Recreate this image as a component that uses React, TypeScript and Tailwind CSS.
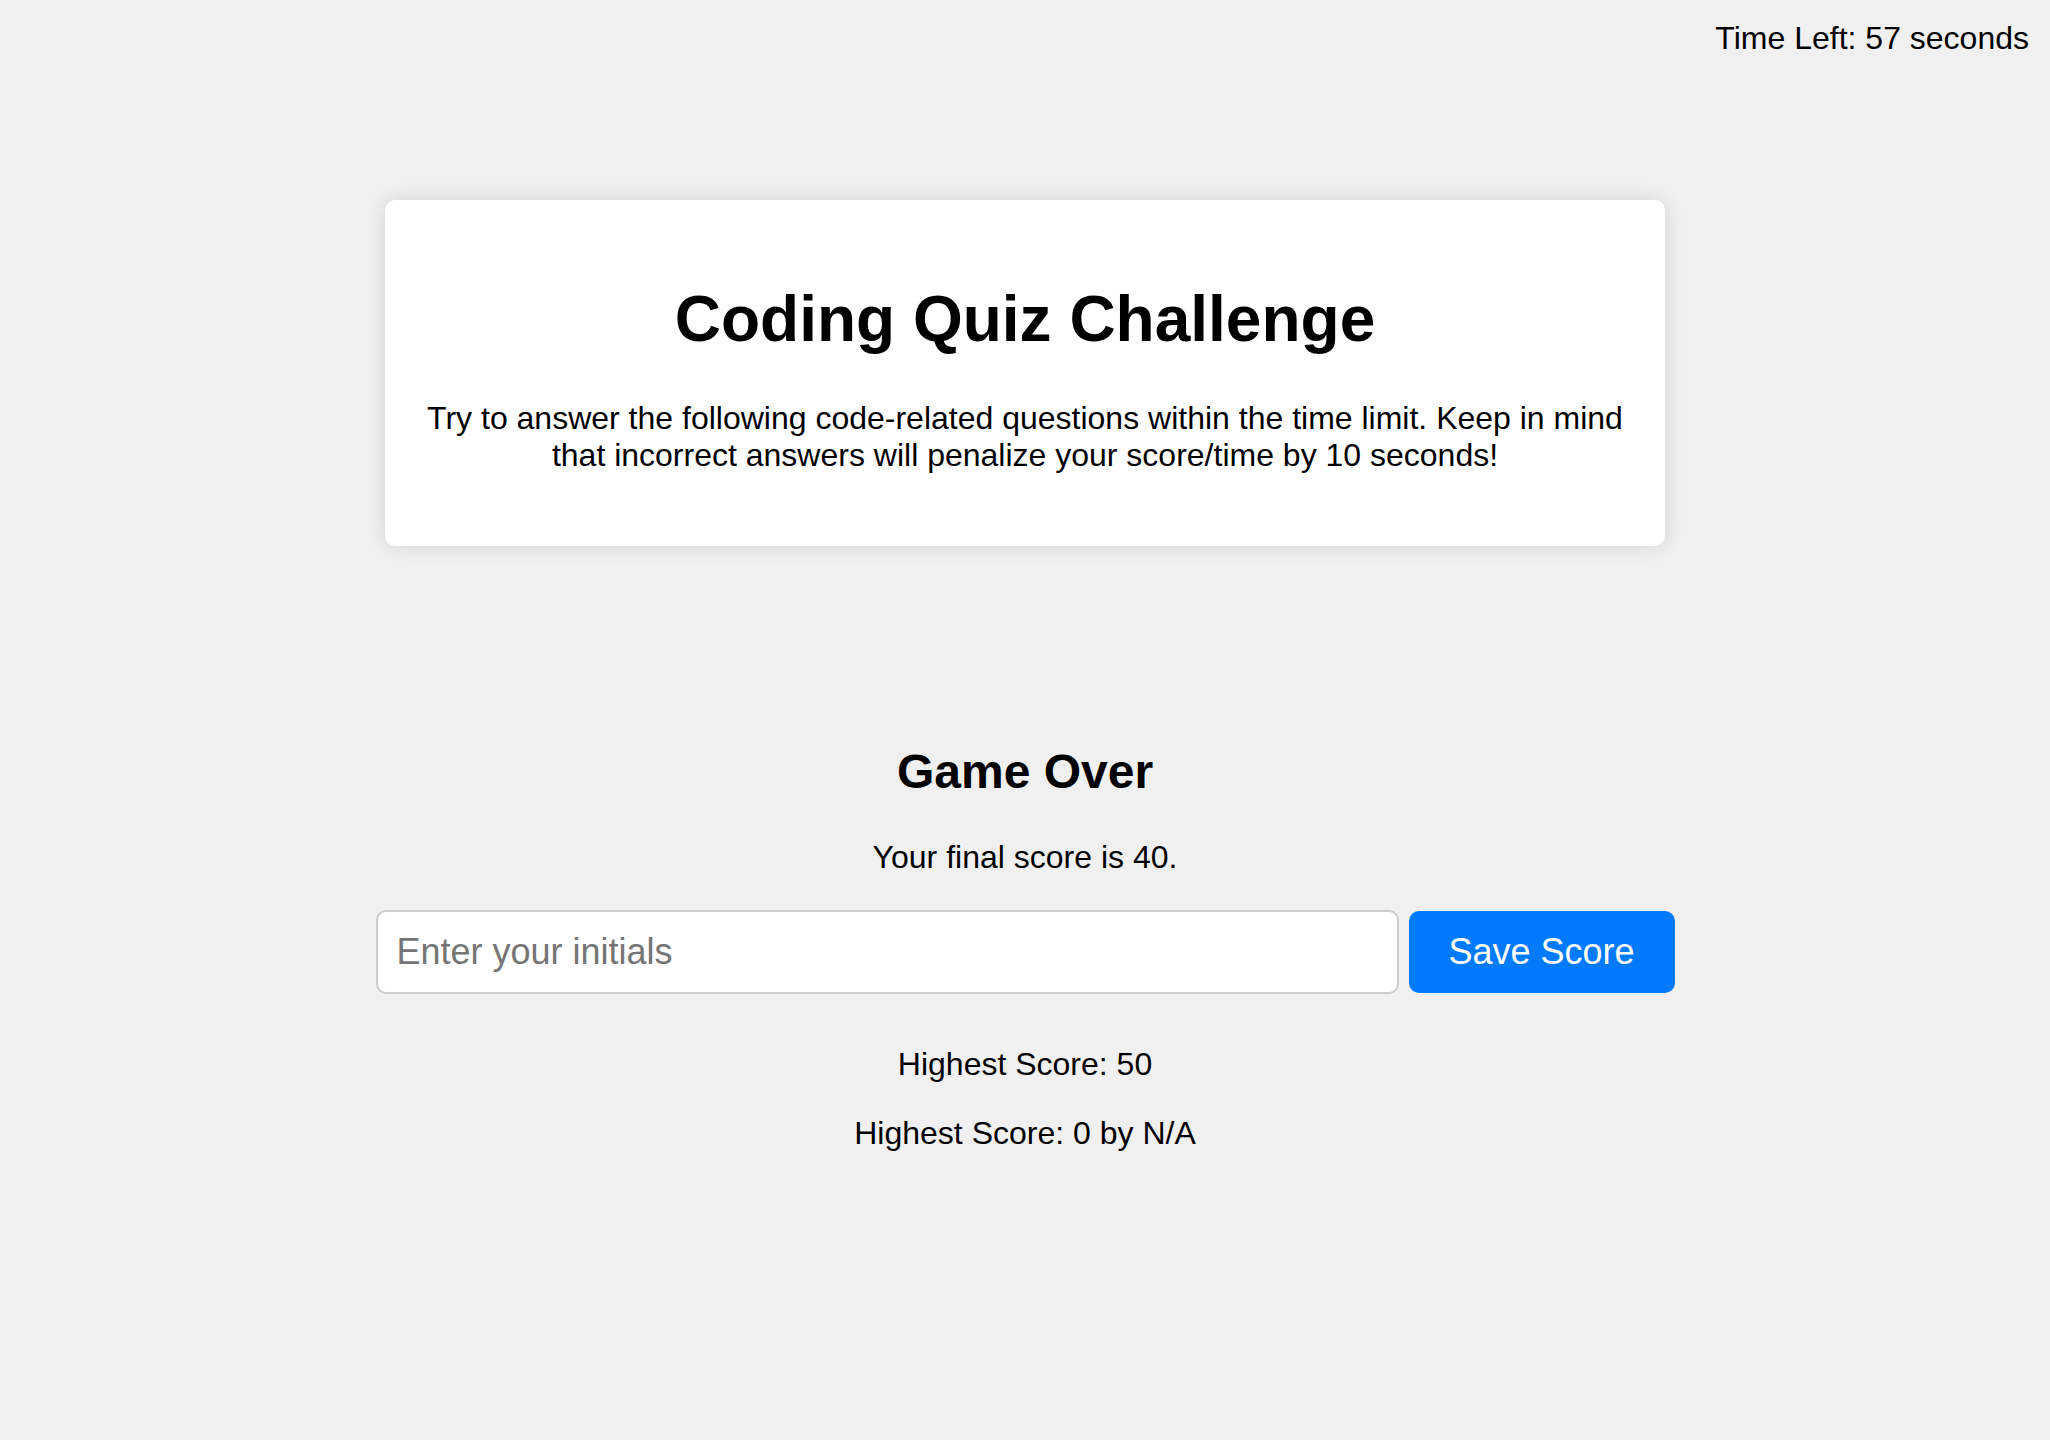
import React from "react";

const App: React.FC = () => {
  return (
    <div
      className="min-h-screen bg-[#f0f0f0] text-black pb-[200px]"
      style={{ fontFamily: '"Liberation Sans", Arial, sans-serif' }}
    >
      <div className="flex justify-end pt-[20px] pr-[21px]">
        <p className="text-[32px] leading-[36.8px]">Time Left: 57 seconds</p>
      </div>

      <div className="mx-auto mt-[143px] w-[1280px] rounded-[10px] bg-white px-[40px] pt-[40px] pb-[40px] text-center shadow-[0_0_20px_rgba(0,0,0,0.12)]">
        <h1 className="mt-[43px] text-[64px] font-bold leading-[73.5px]">
          Coding Quiz Challenge
        </h1>
        <p className="mt-[44px] mb-[32px] text-[32px] leading-[36.8px]">
          Try to answer the following code-related questions within the time
          limit. Keep in mind that incorrect answers will penalize your
          score/time by 10 seconds!
        </p>
      </div>

      <div className="mx-auto mt-[198px] flex w-[1299px] flex-col items-center text-center">
        <h2 className="text-[48px] font-bold leading-[55.2px]">Game Over</h2>
        <p className="mt-[40px] text-[32px] leading-[36.8px]">
          Your final score is 40.
        </p>

        <div className="mt-[34px] flex w-full items-center gap-[10px]">
          <input
            type="text"
            placeholder="Enter your initials"
            className="h-[84px] flex-1 rounded-[10px] border-2 border-[#cccccc] bg-white px-[19px] text-[36px] outline-none placeholder:text-[#757575]"
          />
          <button className="h-[82px] w-[266px] rounded-[10px] bg-[#007bff] text-[36px] text-white">
            Save Score
          </button>
        </div>

        <p className="mt-[52px] text-[32px] leading-[36.8px]">
          Highest Score: 50
        </p>
        <p className="mt-[32px] text-[32px] leading-[36.8px]">
          Highest Score: 0 by N/A
        </p>
      </div>
    </div>
  );
};

export default App;
